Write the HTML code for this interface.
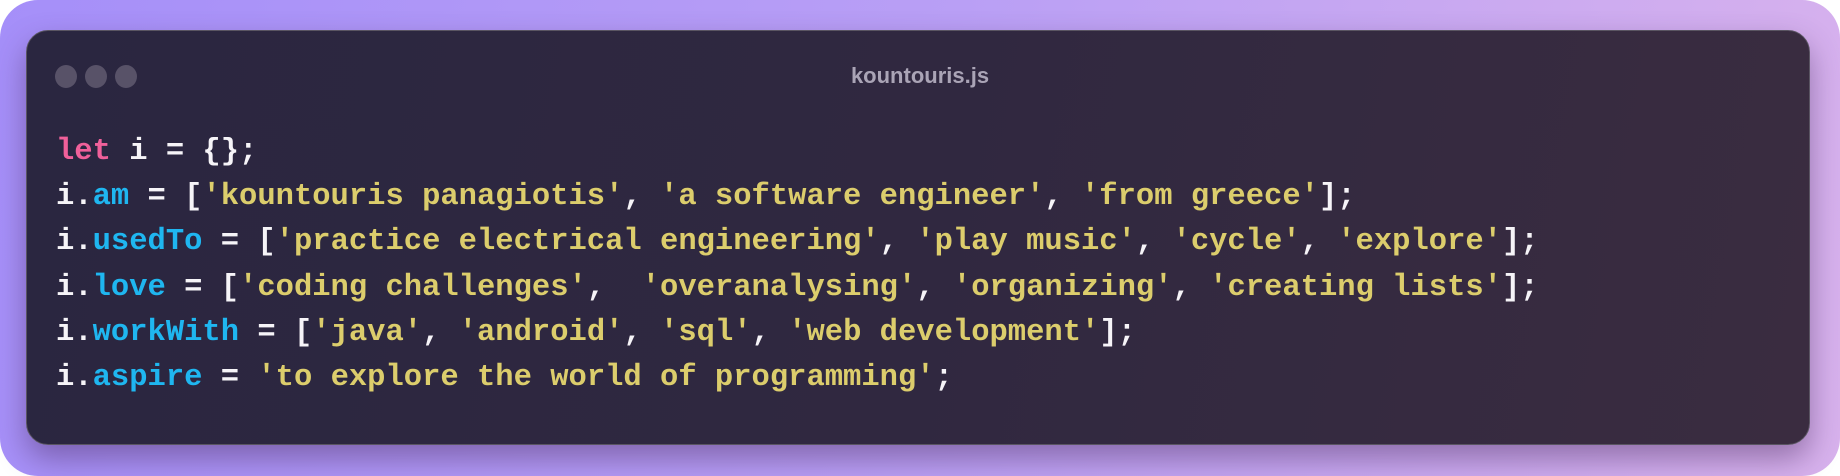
<!DOCTYPE html>
<html><head><style>
html,body{margin:0;padding:0;background:#fff;width:1840px;height:476px;overflow:hidden}
.bg{position:absolute;left:0;top:0;width:1840px;height:476px;border-radius:38px;background:linear-gradient(100deg,#a58ff9 0%,#b99ff5 50%,#d8b2ed 100%)}
.win{position:absolute;left:26px;top:30px;width:1784px;height:415px;box-sizing:border-box;border:1.5px solid #5a5562;border-radius:22px;background:linear-gradient(100deg,#2a2640 0%,#302840 50%,#3a2c40 100%);box-shadow:0 14px 30px rgba(70,40,90,0.45)}
.dot{position:absolute;top:65px;width:22px;height:23px;border-radius:50%;background:#585268}
.title{position:absolute;left:0;right:0;top:63px;text-align:center;font:bold 22px "Liberation Sans",sans-serif;color:#aaa4b6}
pre{position:absolute;left:56px;top:130px;margin:0;font:bold 30.5px/45.2px "Liberation Mono",monospace;color:#f6f4f8}
.k{color:#f0609a}.p{color:#1fb6f0}.s{color:#dccd6c}
</style></head><body>
<div class="bg"></div>
<div class="win"></div>
<div class="dot" style="left:55px"></div><div class="dot" style="left:85px"></div><div class="dot" style="left:115px"></div>
<div class="title">kountouris.js</div>
<pre><span class="k">let</span> i = {};
i.<span class="p">am</span> = [<span class="s">'kountouris panagiotis'</span>, <span class="s">'a software engineer'</span>, <span class="s">'from greece'</span>];
i.<span class="p">usedTo</span> = [<span class="s">'practice electrical engineering'</span>, <span class="s">'play music'</span>, <span class="s">'cycle'</span>, <span class="s">'explore'</span>];
i.<span class="p">love</span> = [<span class="s">'coding challenges'</span>,  <span class="s">'overanalysing'</span>, <span class="s">'organizing'</span>, <span class="s">'creating lists'</span>];
i.<span class="p">workWith</span> = [<span class="s">'java'</span>, <span class="s">'android'</span>, <span class="s">'sql'</span>, <span class="s">'web development'</span>];
i.<span class="p">aspire</span> = <span class="s">'to explore the world of programming'</span>;</pre>
</body></html>
